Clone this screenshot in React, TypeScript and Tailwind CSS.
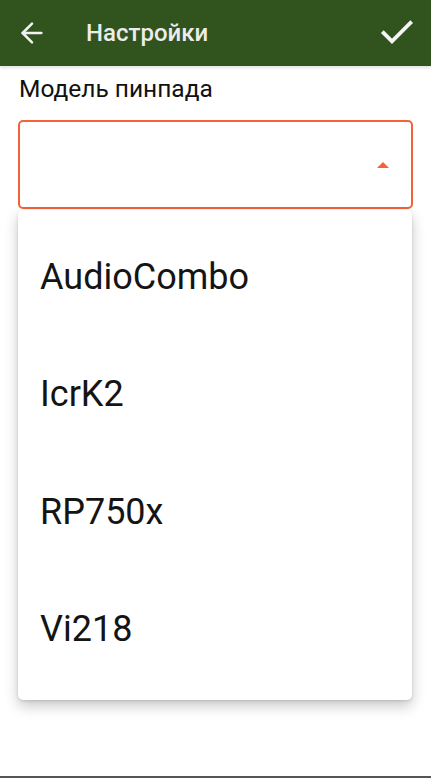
import { ArrowLeft, Check } from "lucide-react"

const models = ["AudioCombo", "IcrK2", "RP750x", "Vi218"]

export default function App() {
  return (
    <div
      className="flex h-[778px] w-[431px] flex-col overflow-hidden bg-white"
      style={{ fontFamily: "Roboto, 'Noto Sans', sans-serif" }}
    >
      <header className="flex h-[66px] shrink-0 items-center bg-[#31531e] shadow-[0_2px_3px_rgba(0,0,0,0.12)]">
        <button type="button" className="ml-[16px] flex h-8 w-8 items-center justify-center text-[#f2f2f2]">
          <ArrowLeft size={32} strokeWidth={1.9} />
        </button>
        <h1 className="ml-[38px] flex-1 text-[24px] font-medium text-[#ececec]">Настройки</h1>
        <button type="button" className="mr-[14px] flex h-10 w-10 items-center justify-center text-[#f5f5f5]">
          <Check size={40} strokeWidth={2.3} strokeLinecap="square" strokeLinejoin="miter" />
        </button>
      </header>

      <div className="relative flex-1 px-[18px]">
        <p className="mt-[8px] pl-px text-[24.5px] leading-[30px] text-[#111]">Модель пинпада</p>
        <div className="mt-[16px] flex h-[89px] items-center justify-end rounded-[5px] border-2 border-[#f4623a] pr-[22px]">
          <span className="h-0 w-0 border-x-[6px] border-b-[6px] border-x-transparent border-b-[#f4623a]" />
        </div>

        <ul className="absolute left-[18px] right-[19px] top-[144px] rounded-[5px] bg-white pb-[12px] pt-[8px] shadow-[0_6px_14px_rgba(0,0,0,0.22),0_1px_3px_rgba(0,0,0,0.12)]">
          {models.map((m) => (
            <li key={m} className="flex h-[117.5px] items-center pl-[22px] text-[36px] text-[#141414]">
              {m}
            </li>
          ))}
        </ul>
      </div>
      <div className="h-[2px] shrink-0 bg-[#555]" />
    </div>
  )
}
